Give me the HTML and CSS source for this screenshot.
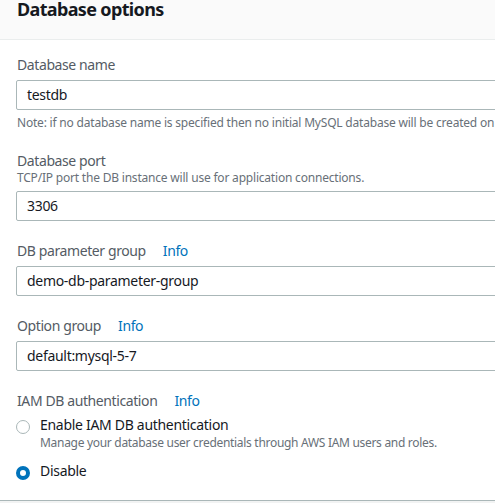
FILE: index.html
```html
<!DOCTYPE html>
<html>
<head>
<meta charset="utf-8">
<link rel="stylesheet" href="styles.css">
</head>
<body>
<div class="panel">
  <div class="panel-header">
    <h2 class="title">Database options</h2>
  </div>
  <div class="panel-body">
    <div class="field">
      <div class="label">Database name</div>
      <div class="input">testdb</div>
      <div class="note">Note: if no database name is specified then no initial MySQL database will be created on the DB instance.</div>
    </div>
    <div class="field">
      <div class="label">Database port</div>
      <div class="desc">TCP/IP port the DB instance will use for application connections.</div>
      <div class="input">3306</div>
    </div>
    <div class="field">
      <div class="label">DB parameter group<span class="info">Info</span></div>
      <div class="input">demo-db-parameter-group</div>
    </div>
    <div class="field">
      <div class="label">Option group<span class="info">Info</span></div>
      <div class="input">default:mysql-5-7</div>
    </div>
    <div class="field">
      <div class="label">IAM DB authentication<span class="info">Info</span></div>
      <div class="radio-group">
        <div class="radio-row">
          <span class="radio"></span>
          <div class="radio-text">
            <div class="radio-label">Enable IAM DB authentication</div>
            <div class="radio-desc">Manage your database user credentials through AWS IAM users and roles.</div>
          </div>
        </div>
        <div class="radio-row">
          <span class="radio checked"></span>
          <div class="radio-text">
            <div class="radio-label">Disable</div>
          </div>
        </div>
      </div>
    </div>
  </div>
</div>
</body>
</html>
```
FILE: styles.css
```css
html, body {
  margin: 0;
  padding: 0;
  background: #f2f3f3;
  font-family: "Noto Sans", "Open Sans", sans-serif;
  overflow: hidden;
}
.panel {
  width: 560px;
  background: #fff;
  border-bottom: 1px solid #aab7b8;
}
.panel-header {
  background: #fafafa;
  border-bottom: 1px solid #eaeded;
  height: 39px;
  padding: 0 17px;
  overflow: hidden;
}
.title {
  margin: -3px 0 0 0;
  font-size: 18px;
  font-weight: 700;
  color: #16191f;
  line-height: 24px;
  letter-spacing: -0.65px;
}
.panel-body {
  padding: 14px 16px 18px 16px;
  display: flex;
  flex-direction: column;
  gap: 19px;
}
.label {
  font-size: 14px;
  color: #545b64;
  line-height: 22px;
  padding-left: 1px;
  margin-bottom: 4px;
  letter-spacing: -0.4px;
}
.info {
  color: #0073bb;
  margin-left: 17px;
}
.desc {
  font-size: 12px;
  color: #687078;
  line-height: 16px;
  margin-top: -6px;
  margin-bottom: 5px;
  padding-left: 1px;
  letter-spacing: -0.2px;
}
.input {
  height: 30px;
  box-sizing: border-box;
  border: 1px solid #aab7b8;
  border-radius: 2px;
  padding: 0 10px;
  font-size: 14px;
  line-height: 28px;
  color: #16191f;
  letter-spacing: -0.3px;
}
.note {
  font-size: 12px;
  color: #687078;
  line-height: 16px;
  margin-top: 5px;
  white-space: nowrap;
  padding-left: 1px;
  letter-spacing: -0.2px;
}
.radio-group {
  display: flex;
  flex-direction: column;
  gap: 9px;
  margin-top: -2px;
}
.radio-row {
  display: flex;
  align-items: flex-start;
  gap: 10px;
}
.radio {
  width: 14px;
  height: 14px;
  box-sizing: border-box;
  border: 1px solid #aab7b8;
  border-radius: 50%;
  margin-top: 6px;
  flex: none;
}
.radio.checked {
  border: 4px solid #0073bb;
}
.radio-label {
  font-size: 14px;
  color: #16191f;
  line-height: 22px;
  letter-spacing: -0.3px;
}
.radio-desc {
  font-size: 12px;
  color: #687078;
  line-height: 16px;
  margin-top: -1px;
  letter-spacing: -0.3px;
}
```
